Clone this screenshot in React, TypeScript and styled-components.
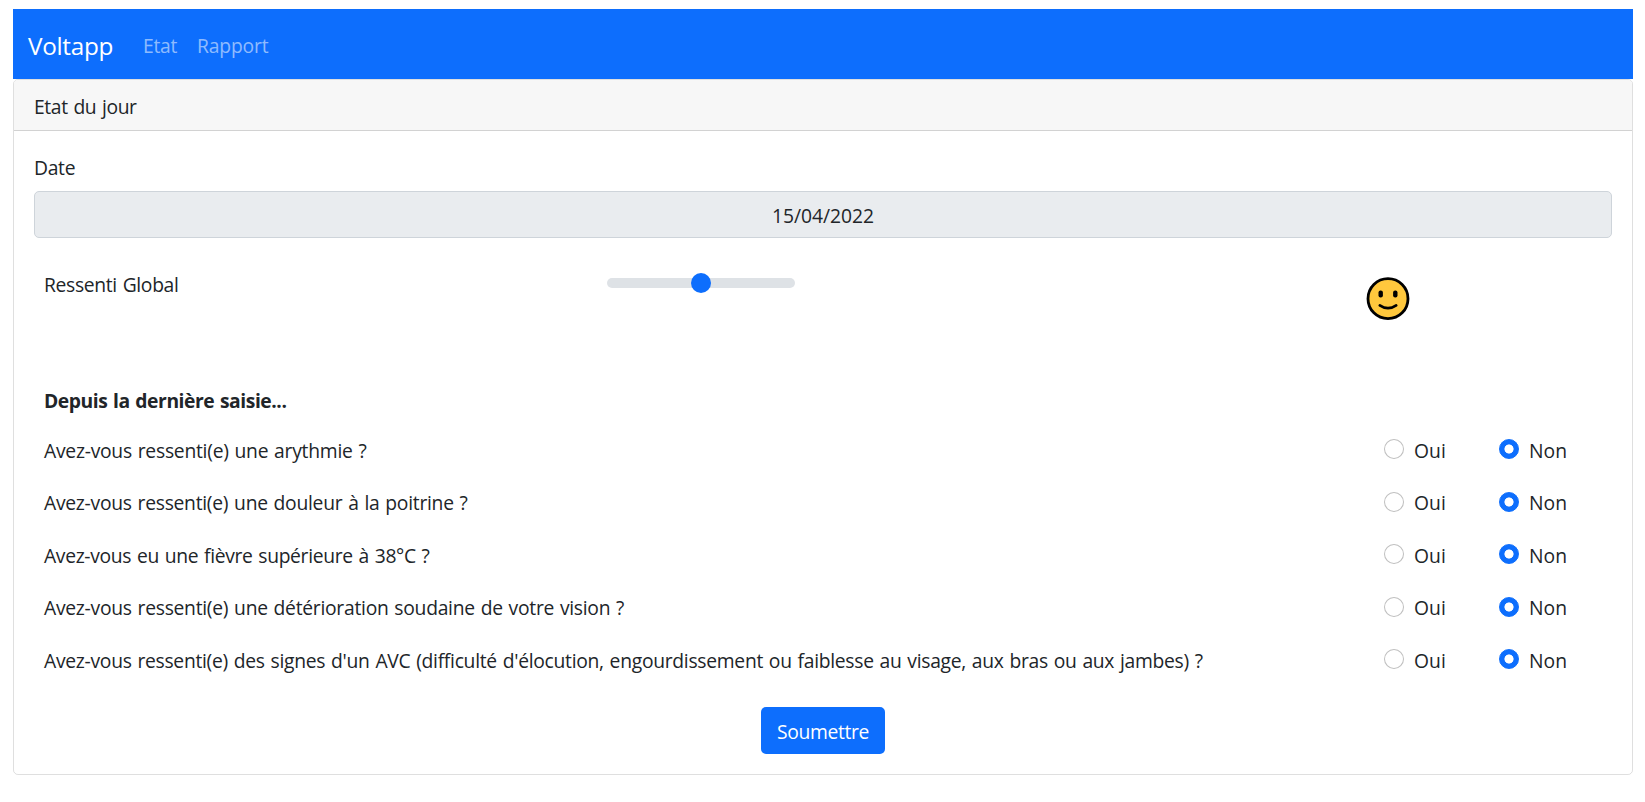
import React, { useState } from "react";
import styled, { createGlobalStyle } from "styled-components";

const GlobalStyle = createGlobalStyle`
  *, *::before, *::after { box-sizing: border-box; }
  body {
    margin: 0;
    background: #fff;
    color: #212529;
    font-family: "Segoe UI", "Open Sans", "Noto Sans", sans-serif;
    font-size: 19.3px;
    line-height: 30px;
    word-spacing: 1.1px;
  }
`;

const Page = styled.main`
  padding: 9px 12px 0 13px;
`;

const Navbar = styled.nav`
  display: flex;
  align-items: center;
  height: 70px;
  padding: 4px 15px 0;
  background: #0d6efd;
`;

const Brand = styled.a<{ $tracking: number }>`
  margin-right: 30px;
  color: #fff;
  font-size: 24.3px;
  letter-spacing: ${(p) => p.$tracking}px;
  text-decoration: none;
`;

const NavLink = styled.a<{ $tracking: number }>`
  margin-right: 20px;
  color: rgba(255, 255, 255, 0.55);
  letter-spacing: ${(p) => p.$tracking}px;
  text-decoration: none;
`;

const Card = styled.section`
  height: 696px;
  border: 1px solid rgba(0, 0, 0, 0.125);
  border-radius: 5px;
`;

const CardHeader = styled.header`
  height: 51px;
  padding: 12px 20px 8px;
  background: #f7f7f7;
  border-bottom: 1px solid rgba(0, 0, 0, 0.15);
  border-radius: 4px 4px 0 0;
`;

const CardBody = styled.form`
  display: flex;
  flex-direction: column;
  padding: 22px 20px 20px;
`;

const Label = styled.label<{ $tracking?: number }>`
  white-space: nowrap;
  letter-spacing: ${(p) => p.$tracking ?? 0}px;
`;

const DateInput = styled.input`
  height: 47px;
  margin-top: 8px;
  padding: 1px 14px 0;
  border: 1px solid #ced4da;
  border-radius: 5px;
  background: #e9ecef;
  color: #212529;
  font: inherit;
  letter-spacing: -0.05px;
  text-align: center;
  outline: none;
`;

const FeelingRow = styled.div`
  display: grid;
  grid-template-columns: 563px 188px 1fr;
  height: 115px;
  margin-top: 32px;
  padding: 0 10px;
`;

const Slider = styled.input`
  appearance: none;
  width: 188px;
  height: 20px;
  margin: 3px 0 0;
  background: transparent;

  &::-webkit-slider-runnable-track {
    height: 10px;
    border-radius: 20px;
    background: #dee2e6;
  }
  &::-webkit-slider-thumb {
    appearance: none;
    width: 20px;
    height: 20px;
    margin-top: -5px;
    border-radius: 50%;
    background: #0d6efd;
  }
`;

const Mood = styled.svg`
  width: 44px;
  height: 44px;
  margin: 7px 0 0 571px;
`;

const SectionTitle = styled.strong`
  height: 50px;
  padding: 1px 0 0 10px;
  font-weight: 700;
  letter-spacing: -0.44px;
`;

const QuestionRow = styled.fieldset`
  display: grid;
  grid-template-columns: 1340px 115px 1fr;
  height: 52.5px;
  margin: 0;
  padding: 0.7px 0 0 10px;
  border: 0;
`;

const Choice = styled.label`
  display: flex;
  gap: 10px;
  letter-spacing: 0.1px;
`;

const Radio = styled.input`
  appearance: none;
  width: 20px;
  height: 20px;
  margin: 3.4px 0 0;
  border: 1px solid rgba(0, 0, 0, 0.25);
  border-radius: 50%;
  background: #fff;

  &:checked {
    border-color: #0d6efd;
    background: radial-gradient(circle, #fff 4.2px, #0d6efd 4.9px);
  }
`;

const SubmitButton = styled.button`
  align-self: center;
  width: 124px;
  height: 47px;
  margin-top: 9.5px;
  padding: 3px 0 0;
  border: 0;
  border-radius: 5px;
  background: #0d6efd;
  color: #fff;
  font: inherit;
  letter-spacing: -0.35px;
`;

const questions = [
  { id: "arythmie", text: "Avez-vous ressenti(e) une arythmie ?", tracking: -0.25 },
  { id: "douleur", text: "Avez-vous ressenti(e) une douleur à la poitrine ?", tracking: -0.27 },
  { id: "fievre", text: "Avez-vous eu une fièvre supérieure à 38°C ?", tracking: -0.33 },
  { id: "vision", text: "Avez-vous ressenti(e) une détérioration soudaine de votre vision ?", tracking: -0.27 },
  {
    id: "avc",
    text: "Avez-vous ressenti(e) des signes d'un AVC (difficulté d'élocution, engourdissement ou faiblesse au visage, aux bras ou aux jambes) ?",
    tracking: -0.285,
  },
];

function SmileIcon() {
  return (
    <Mood viewBox="0 0 44 44" aria-hidden="true">
      <circle cx="22" cy="21.7" r="20" fill="#ffc83d" stroke="#000" strokeWidth="2.8" />
      <rect x="12.5" y="13.6" width="4.4" height="7" rx="2" />
      <rect x="27.1" y="13.6" width="4.4" height="7" rx="2" />
      <path d="M13.8 28.4 Q22 34 30.2 28.4" fill="none" stroke="#000" strokeWidth="2.7" strokeLinecap="round" />
    </Mood>
  );
}

export default function App() {
  const [feeling, setFeeling] = useState(50);

  return (
    <>
      <GlobalStyle />
      <Page>
        <Navbar>
          <Brand $tracking={-0.3}>Voltapp</Brand>
          <NavLink $tracking={-0.3}>Etat</NavLink>
          <NavLink $tracking={-0.15}>Rapport</NavLink>
        </Navbar>
        <Card>
          <CardHeader>
            <Label $tracking={-0.38}>Etat du jour</Label>
          </CardHeader>
          <CardBody onSubmit={(e) => e.preventDefault()}>
            <Label htmlFor="date" $tracking={-0.3}>Date</Label>
            <DateInput id="date" value="15/04/2022" readOnly />
            <FeelingRow>
              <Label htmlFor="feeling" $tracking={-0.33}>Ressenti Global</Label>
              <Slider
                id="feeling"
                type="range"
                min={0}
                max={100}
                value={feeling}
                onChange={(e) => setFeeling(Number(e.target.value))}
              />
              <SmileIcon />
            </FeelingRow>
            <SectionTitle>Depuis la dernière saisie...</SectionTitle>
            {questions.map((q) => (
              <QuestionRow key={q.id}>
                <Label as="span" $tracking={q.tracking}>{q.text}</Label>
                <Choice>
                  <Radio type="radio" name={q.id} />
                  Oui
                </Choice>
                <Choice>
                  <Radio type="radio" name={q.id} defaultChecked />
                  Non
                </Choice>
              </QuestionRow>
            ))}
            <SubmitButton type="submit">Soumettre</SubmitButton>
          </CardBody>
        </Card>
      </Page>
    </>
  );
}
